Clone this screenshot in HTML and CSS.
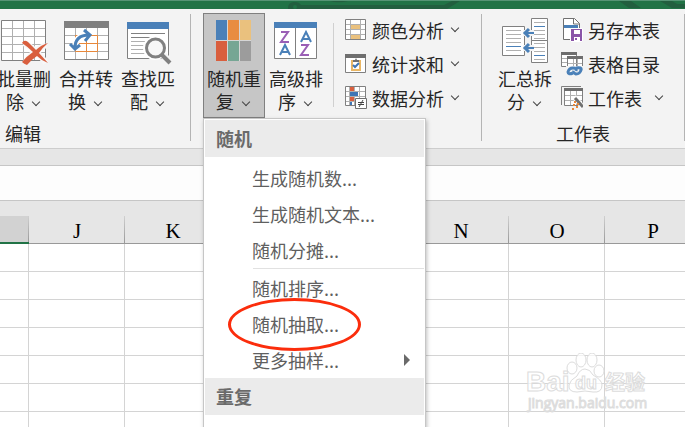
FILE: index.html
```html
<!DOCTYPE html>
<html lang="zh-CN">
<head>
    <meta charset="UTF-8">
    <meta name="viewport" content="width=device-width, initial-scale=1.0">
    <title>随机重复</title>
    <link rel="stylesheet" href="styles.css">
</head>
<body>
    <header class="titlebar">
        <svg width="900" height="9" viewBox="0 0 900 9">
            <g fill="#225f3f">
                <path d="M288 9V6a7 6 0 0 1 13-2h143l8-4h8l-13 8H303z"/>
                <path d="M330 0q8 2.500 18 0zM619 0h12l10 7h-12zM660 0h12l12 7h-12zM672 3h13v4h-10z"/>
            </g>
            <circle cx="295" cy="6" r="2" fill="#217346"/>
        </svg>
    </header>

    <div class="ribbon">
        <section class="group group-edit">
            <div class="tools">
                <button class="big">
                    <svg class="big-icon" width="48" height="44" viewBox="0 0 48 44">
                        <path fill="#fff" stroke="#808080" d="M1.500 1.500h44v40h-44z"/>
                        <path fill="none" stroke="#b0b0b0" d="M12.500 2v39M23.500 2v39M34.500 2v39M2 9.500h43M2 17.500h43M2 25.500h43M2 33.500h43"/>
                        <path fill="none" stroke="#f7f7f7" stroke-width="6" d="M24 24q12 6 22 20M46 26q-14 6-21 18"/>
                        <path fill="#d95f3e" d="M22 24q2-4 6-1l8 8q5-5 12-7-6 5-9 10l9 10q-6-2-11-7-6 4-10 9-3-1-5-3 5-6 11-10-5-5-11-9z"/>
                    </svg>
                    <span>批量删<br>除 <i class="chevron"></i></span>
                </button>
                <button class="big">
                    <svg class="big-icon" width="48" height="44" viewBox="0 0 48 44">
                        <path fill="#fff" stroke="#808080" d="M2.500 2.500h44v38h-44z"/>
                        <path fill="#808080" d="M2 2h45v7H2z"/>
                        <path fill="none" stroke="#b0b0b0" d="M13.500 9v31M24.500 9v31M35.500 9v31M3 16.500h43M3 24.500h43M3 32.500h43"/>
                        <path fill="#fff" d="M14 17h21v15H14z"/>
                        <path fill="none" stroke="#e8883a" d="M13.500 16.500h22v16h-22zM24.500 17v15M14 24.500h21"/>
                        <path fill="none" stroke="#fff" stroke-width="6" d="M13 30Q13 16 27 16"/>
                        <path fill="none" stroke="#4a80b8" stroke-width="3" d="M13 29Q13 16 27 16M22 11l6 5-5 6M8 25l5 5 5-4"/>
                    </svg>
                    <span>合并转<br>换 <i class="chevron"></i></span>
                </button>
                <button class="big">
                    <svg class="big-icon" width="48" height="44" viewBox="0 0 48 44">
                        <path fill="#fff" stroke="#808080" d="M3.500 3.500h41v36h-41z"/>
                        <path fill="#4a80b8" d="M3 3h42v7H3z"/>
                        <path fill="none" stroke="#808080" d="M7 14.500h34M7 18.500h22"/>
                        <path fill="none" stroke="#b0b0b0" d="M7 22.500h18M7 26.500h14M7 30.500h14M7 34.500h15"/>
                        <path stroke="#f3f3f3" stroke-width="7" d="M39 36l7 7"/>
                        <circle cx="31" cy="29" r="10" fill="#fff" stroke="#fff" stroke-width="4"/>
                        <circle cx="31.500" cy="29" r="9" fill="#f7f7f7" stroke="#808080" stroke-width="3"/>
                        <path stroke="#808080" stroke-width="4" d="M38 36l8 8"/>
                    </svg>
                    <span>查找匹<br>配 <i class="chevron"></i></span>
                </button>
            </div>
            <h2 class="group-name">编辑</h2>
        </section>
        <div class="divider"></div>

        <section class="group group-analyse">
            <div class="tools">
                <div class="dropdown">
                    <button class="big pressed" aria-expanded="true">
                        <svg class="big-icon" width="48" height="44" viewBox="0 0 48 44">
                            <path fill="#d6d6d6" d="M6 1h35v41H6z"/>
                            <path fill="#4a80b8" d="M6 1h11v20H6z"/>
                            <path fill="#e88c42" d="M18 1h11v20H18z"/>
                            <path fill="#eac17e" d="M30 1h11v20H30z"/>
                            <path fill="#d95f3e" d="M6 22h11v20H6z"/>
                            <path fill="#76a694" d="M18 22h11v20H18z"/>
                            <path fill="#9c9c9c" d="M30 22h11v20H30z"/>
                        </svg>
                        <span>随机重<br>复 <i class="chevron"></i></span>
                    </button>
                    <div class="menu">
                        <h3>随机</h3>
                        <button>生成随机数...</button>
                        <button>生成随机文本...</button>
                        <button>随机分摊...</button>
                        <hr>
                        <button>随机排序...</button>
                        <button class="marked">随机抽取...</button>
                        <button class="has-sub">更多抽样...</button>
                        <h3>重复</h3>
                        <button>设置唯一值</button>
                    </div>
                </div>
                <button class="big">
                    <svg class="big-icon" width="48" height="44" viewBox="0 0 48 44">
                        <path fill="#fff" stroke="#808080" d="M2.500 3.500h42v36h-42zM23.500 9v30"/>
                        <path fill="#4a80b8" d="M2 3h43v6H2z"/>
                        <g fill="none" stroke-width="2">
                            <path stroke="#9a5fb5" d="M9 13h7L9 23h8M29 26h7l-7 10h8"/>
                            <path stroke="#4a80b8" d="M8 36l5-10 5 10M10 33h6M29 23l5-10 5 10M31 20h6"/>
                        </g>
                    </svg>
                    <span>高级排<br>序 <i class="chevron"></i></span>
                </button>
                <div class="divider short"></div>
                <div class="stack">
                    <button class="small">
                        <svg width="22" height="24" viewBox="0 0 22 24">
                            <path fill="#fff" stroke="#808080" d="M.5 1.500h20v20H.5z"/>
                            <path fill="none" stroke="#b0b0b0" d="M5.500 2v19M15.500 2v19M1 6.500h19M1 11.500h19M1 16.500h19"/>
                            <path fill="#eac17e" d="M6 7h9v4H6zM6 17h9v4H6z"/>
                        </svg>
                        颜色分析<i class="chevron"></i>
                    </button>
                    <button class="small">
                        <svg width="22" height="24" viewBox="0 0 22 24">
                            <path fill="#fff" stroke="#808080" d="M.5 2.500h20v18H.5z"/>
                            <path fill="#6e6e6e" d="M0 2h21v4H0z"/>
                            <path fill="none" stroke="#eab765" stroke-width="2" d="M8 9H7v9h8V9h-1"/>
                            <path fill="#707070" d="M8 10V8h2l1-2 1 2h2v2z"/>
                            <path fill="none" stroke="#3f76b5" stroke-width="2" d="M8 13l2 2 4-4"/>
                        </svg>
                        统计求和<i class="chevron"></i>
                    </button>
                    <button class="small">
                        <svg width="22" height="24" viewBox="0 0 22 24">
                            <path fill="#fff" stroke="#808080" d="M.5.5h20v19H.5z"/>
                            <path fill="none" stroke="#b0b0b0" d="M4.500 1v18M9.500 1v18M14.500 1v18M1 5.500h19M1 10.500h19M1 15.500h19"/>
                            <path fill="#d95f3e" d="M5 1h4v4H5zM5 11h4v4H5z"/>
                            <path fill="#3f76b5" d="M5 6h8v4H5zM5 16h2v3H5z"/>
                            <path fill="#fff" stroke="#707070" d="M10.500 12.500h11v10h-11z"/>
                            <path fill="none" stroke="#444" d="M13 16.500h6M13 18.500h6M18 14l-4 7"/>
                        </svg>
                        数据分析<i class="chevron"></i>
                    </button>
                </div>
            </div>
        </section>
        <div class="divider"></div>

        <section class="group group-sheet">
            <div class="tools">
                <button class="big">
                    <svg class="big-icon" width="48" height="44" viewBox="0 0 48 44">
                        <path fill="#fff" stroke="#808080" d="M1.500 7.500h22v29h-22zM30.500-.5h16v22h-16zM30.500 21.500h16v22h-16z"/>
                        <path fill="none" stroke="#b0b0b0" d="M5 11.500h15M5 15.500h15M5 19.500h15M5 23.500h15M5 31.500h15M33 3.500h11M33 11.500h11M33 15.500h11M33 19.500h11M33 24.500h11M33 28.500h11M33 32.500h11M33 40.500h11"/>
                        <path fill="none" stroke="#4a80b8" d="M5 27.500h15M33 7.500h11M33 36.500h11"/>
                        <path fill="none" stroke="#f3f3f3" stroke-width="6" d="M22 14h11M22 29h11"/>
                        <path fill="none" stroke="#4a80b8" stroke-width="2" d="M23 14h10M23 29h10"/>
                        <path fill="none" stroke="#4a80b8" stroke-width="3" d="M28 10l-4 4 4 4M28 25l-4 4 4 4"/>
                    </svg>
                    <span>汇总拆<br>分 <i class="chevron"></i></span>
                </button>
                <div class="stack">
                    <button class="small">
                        <svg width="22" height="24" viewBox="0 0 22 24">
                            <path fill="#fff" stroke="#707070" d="M2.500.5h11l5 5v16h-16z"/>
                            <path fill="none" stroke="#707070" d="M12.500 1v5h6"/>
                            <path fill="#4a80b8" d="M3 7h14v3H3z"/>
                            <path fill="#8a55a8" stroke="#fff" d="M9.500 10.500h12v13h-12z"/>
                            <path fill="#fff" d="M13 12h6v4h-6zM13 19h6v4h-6z"/>
                            <path fill="#8a55a8" d="M14 20h2v2h-2z"/>
                        </svg>
                        另存本表
                    </button>
                    <button class="small">
                        <svg width="22" height="24" viewBox="0 0 22 24">
                            <path fill="#fff" stroke="#808080" d="M.5.5h15v14H.5zM6.500 4.500h15v13h-15z"/>
                            <path fill="none" stroke="#b0b0b0" d="M1 6.500h5M1 10.500h5M12.500 7v10M16.500 7v10M7 11.500h14"/>
                            <path fill="#6e6e6e" d="M0 0h16v3H0zM6 4h16v3H6z"/>
                            <path fill="#f3f3f3" d="M5 14h17v9H5z"/>
                            <g fill="none" stroke="#4a80b8" stroke-width="3">
                                <path d="M12 21q-5 2-5-1 1-4 5-4 4 0 3 3"/>
                                <path d="M15 16q6-1 5 2-1 4-5 4-3-1-2-3"/>
                            </g>
                        </svg>
                        表格目录
                    </button>
                    <button class="small">
                        <svg width="22" height="24" viewBox="0 0 22 24">
                            <path fill="none" stroke="#808080" d="M.5 19V.5H20"/>
                            <path fill="#fff" stroke="#808080" d="M3.500 2.500h18v17h-18z"/>
                            <path fill="#6e6e6e" d="M3 2h19v3H3z"/>
                            <path fill="none" stroke="#b0b0b0" d="M9.500 5v14M15.500 5v14M4 9.500h17M4 14.500h17"/>
                            <path stroke="#fff" stroke-width="5" d="M13 11l9 10"/>
                            <path stroke="#707070" stroke-width="3" d="M14 12l8 9"/>
                            <path fill="#e8883a" d="M13 15h2v2h-2zM16 17h2v2h-2zM12 18h2v2h-2zM15 20h2v2h-2zM11 22h2v2h-2z"/>
                        </svg>
                        工作表<i class="chevron"></i>
                    </button>
                </div>
            </div>
            <h2 class="group-name">工作表</h2>
        </section>
        <div class="divider"></div>
    </div>

    <div class="formula-bar"></div>

    <main class="sheet">
        <table>
            <thead>
                <tr><th class="selected"></th><th>J</th><th>K</th><th></th><th></th><th>N</th><th>O</th><th>P</th></tr>
            </thead>
            <tbody>
                <tr><td></td><td></td><td></td><td></td><td></td><td></td><td></td><td></td></tr>
                <tr><td></td><td></td><td></td><td></td><td></td><td></td><td></td><td></td></tr>
                <tr><td></td><td></td><td></td><td></td><td></td><td></td><td></td><td></td></tr>
                <tr><td></td><td></td><td></td><td></td><td></td><td></td><td></td><td></td></tr>
                <tr><td></td><td></td><td></td><td></td><td></td><td></td><td></td><td></td></tr>
                <tr><td></td><td></td><td></td><td></td><td></td><td></td><td></td><td></td></tr>
                <tr><td></td><td></td><td></td><td></td><td></td><td></td><td></td><td></td></tr>
            </tbody>
        </table>
    </main>

    <svg class="watermark" width="128" height="64" viewBox="0 0 128 64">
        <g class="mark">
            <text class="brand" x="1" y="38">Bai</text>
            <ellipse cx="47" cy="15" rx="5" ry="6"/>
            <ellipse cx="56" cy="7" rx="5" ry="7"/>
            <ellipse cx="67" cy="7" rx="5" ry="7"/>
            <ellipse cx="74" cy="18" rx="5" ry="6"/>
            <path d="M60 16q5 0 8 6 9 5 9 10 0 8-9 7-8-2-16 0-9 0-8-7 1-5 8-9 3-7 8-7z"/>
            <text class="du" x="50" y="36">du</text>
            <text class="cjk" x="80" y="37">经验</text>
            <text class="url" x="3" y="55">jingyan.baidu.com</text>
        </g>
    </svg>
</body>
</html>
```
FILE: styles.css
```css
*,
*::after {
    box-sizing: border-box;
}

body {
    margin: 0;
    height: 100vh;
    overflow: hidden;
    position: relative;
    background: #fff;
    color: #262626;
    font-family: "Noto Sans CJK SC", sans-serif;
    font-size: 18px;
}

button {
    margin: 0;
    padding: 0;
    border: 1px solid transparent;
    background: none;
    color: inherit;
    font: inherit;
    white-space: nowrap;
}

.titlebar {
    height: 9px;
    overflow: hidden;
    background: #217346;
    border-top: 1px solid #569475;
}

.titlebar svg {
    display: block;
}

/* ribbon */
.ribbon {
    display: flex;
    height: 140px;
    padding-top: 4px;
    background: #f3f3f3;
    border-bottom: 1px solid #cdcdcd;
}

.group {
    flex: none;
}

.group-edit {
    width: 334px;
    margin-left: -144px;
}

.group-edit .tools {
    justify-content: flex-end;
    padding-right: 11px;
}

.group-analyse .tools {
    padding: 0 22px 0 12px;
}

.group-sheet .tools {
    padding: 0 21px 0 12px;
}

.tools {
    display: flex;
    height: 105px;
}

.group-name {
    margin: 2px 0 0;
    font-size: 18px;
    font-weight: normal;
    line-height: 26px;
    text-align: center;
}

.divider {
    flex: none;
    width: 1px;
    margin: 1px 0 7px;
    background: #b4b4b4;
}

.divider.short {
    margin: 10px 11px 11px 6px;
    background: #d0d0d0;
}

.big {
    display: flex;
    flex-direction: column;
    align-items: center;
    width: 62px;
    height: 105px;
    padding-top: 5px;
    line-height: 23px;
}

.big-icon {
    flex: none;
    margin-bottom: 4px;
    overflow: visible;
}

.big.pressed {
    background: #c6c6c6;
    border-color: #808080;
}

.stack {
    display: flex;
    flex-direction: column;
}

.group-sheet .stack {
    width: 102px;
    margin-left: 5px;
}

.small {
    display: flex;
    align-items: center;
    gap: 5px;
    height: 34px;
    border: 0;
}

.chevron {
    display: inline-block;
    width: 6px;
    height: 6px;
    margin: 0 3px 4px 5px;
    border: solid #444;
    border-width: 0 1px 1px 0;
    transform: rotate(45deg);
}

.small .chevron {
    margin: 0 1px 4px auto;
}

.group-analyse .small .chevron {
    margin-left: 3px;
}

/* dropdown menu */
.dropdown {
    position: relative;
}

.menu {
    position: absolute;
    top: 105px;
    left: 0;
    z-index: 2;
    width: 223px;
    padding: 1px;
    background: #fff;
    border: 1px solid #c6c6c6;
    box-shadow: 1px 2px 4px rgba(0, 0, 0, 0.25);
    color: #5f5f5f;
}

.menu h3 {
    margin: 0 0 3px;
    padding-left: 11px;
    background: #ebebeb;
    color: #6a6a6a;
    font-size: 18px;
    font-weight: bold;
    line-height: 37px;
}

.menu button {
    display: block;
    position: relative;
    width: 100%;
    height: 36px;
    padding-left: 47px;
    border: 0;
    text-align: left;
}

.menu hr {
    height: 1px;
    margin: 0 0 1px 48px;
    border: 0;
    background: #e1e1e1;
}

.marked::after {
    content: "";
    position: absolute;
    top: -8px;
    left: 23px;
    width: 133px;
    height: 53px;
    border: 3px solid #fb2d0c;
    border-radius: 50%;
}

.has-sub::after {
    content: "";
    position: absolute;
    top: 12px;
    right: 14px;
    border: solid transparent;
    border-width: 6px 0 6px 6px;
    border-left-color: #6a6a6a;
}

/* sheet */
.formula-bar {
    height: 52px;
    background: #fdfdfd;
    border: solid #c6c6c6;
    border-width: 1px 0;
    border-top: 16px solid #e6e6e6;
    box-shadow: inset 0 1px #c6c6c6;
}

.sheet {
    height: 226px;
    overflow: hidden;
    padding-top: 15px;
    background: linear-gradient(#e6e6e6 43px, #fff 43px);
}

.sheet table {
    width: 701px;
    table-layout: fixed;
    border-collapse: separate;
    border-spacing: 0;
}

.sheet th,
.sheet td {
    height: 28px;
    padding: 0;
    border: solid #d4d4d4;
    border-width: 0 1px 1px 0;
}

.sheet th {
    width: 96px;
    padding-top: 4px;
    background: linear-gradient(#d0d0d0, #999) right / 1px 100% no-repeat;
    border-width: 0 0 1px;
    border-color: #999;
    color: #000;
    font-family: "Liberation Serif", "Noto Sans CJK SC", serif;
    font-size: 21px;
    font-weight: normal;
    line-height: 23px;
}

.sheet th.selected {
    width: 29px;
    background-color: #d2d2d2;
    border-bottom: 2px solid #217346;
}

/* watermark */
.watermark {
    position: absolute;
    right: 32px;
    bottom: 10px;
}

.mark {
    fill: #fff;
    fill-opacity: 0.7;
    stroke: #dcdcdc;
    font-family: "Liberation Sans", "Noto Sans CJK SC", sans-serif;
    font-weight: bold;
}

.brand {
    font-size: 28px;
}

.du {
    font-size: 18px;
}

.cjk {
    font-family: "Noto Sans CJK SC", sans-serif;
    font-size: 20px;
}

.url {
    font-family: "Open Sans", sans-serif;
    font-size: 14px;
    font-weight: normal;
}
```
